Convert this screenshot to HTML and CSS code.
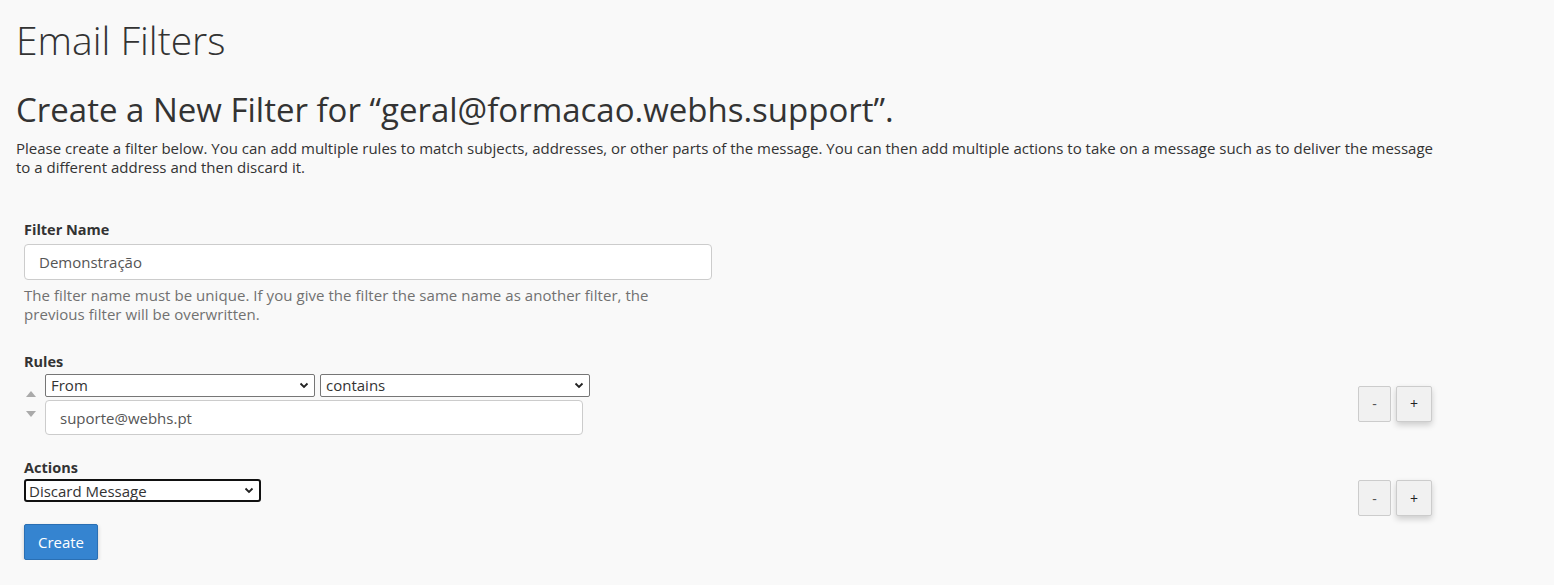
FILE: index.html
```html
<!DOCTYPE html>
<html lang="en">
<head>
<meta charset="utf-8">
<title>Email Filters</title>
<link rel="stylesheet" href="styles.css">
</head>
<body>
<div class="page">
  <h1 class="page-title">Email Filters</h1>
  <h2 class="subtitle">Create a New Filter for “geral@formacao.webhs.support”.</h2>
  <p class="intro">Please create a filter below. You can add multiple rules to match subjects, addresses, or other parts of the message. You can then add multiple actions to take on a message such as to deliver the message to a different address and then discard it.</p>

  <form class="filter-form">
    <div class="field">
      <label class="label">Filter Name</label>
      <input class="text-input name-input" type="text" value="Demonstração">
      <p class="help">The filter name must be unique. If you give the filter the same name as another filter, the previous filter will be overwritten.</p>
    </div>

    <div class="field rules">
      <label class="label">Rules</label>
      <div class="row">
        <div class="rule">
          <div class="arrows">
            <svg width="10" height="6" viewBox="0 0 10 6"><path d="M0 6 L5 0 L10 6 Z" fill="#aaa"/></svg>
            <svg width="10" height="6" viewBox="0 0 10 6"><path d="M0 0 L5 6 L10 0 Z" fill="#aaa"/></svg>
          </div>
          <div class="rule-body">
            <div class="selects">
              <select class="sel sel-part"><option>From</option></select>
              <select class="sel sel-match"><option>contains</option></select>
            </div>
            <input class="text-input value-input" type="text" value="suporte@webhs.pt">
          </div>
        </div>
        <div class="btns">
          <button type="button" class="btn-sm minus">-</button>
          <button type="button" class="btn-sm plus">+</button>
        </div>
      </div>
    </div>

    <div class="field actions">
      <label class="label">Actions</label>
      <div class="row row-top">
        <select class="sel sel-action"><option>Discard Message</option></select>
        <div class="btns">
          <button type="button" class="btn-sm minus">-</button>
          <button type="button" class="btn-sm plus">+</button>
        </div>
      </div>
    </div>

    <button type="button" class="btn-primary">Create</button>
  </form>
</div>
</body>
</html>
```
FILE: styles.css
```css
html, body {
  margin: 0;
  padding: 0;
  background: #f9f9f9;
}
body {
  font-family: "Open Sans", "Liberation Sans", sans-serif;
  color: #333;
  font-size: 15px;
}
.page {
  padding: 0 16px;
  width: 1428px;
}
.page-title {
  font-weight: 300;
  font-size: 39px;
  line-height: 48px;
  margin: 16px 0 0 0;
  color: #333;
}
.subtitle {
  font-weight: 500;
  font-size: 33px;
  line-height: 40px;
  margin: 26px 0 0 0;
  color: #333;
}
.intro {
  margin: 9px 0 0 0;
  line-height: 19px;
  font-size: 15px;
  letter-spacing: 0;
}
.filter-form {
  padding: 0 8px;
  margin-top: 43px;
}
.field {
  display: flex;
  flex-direction: column;
}
.label {
  font-weight: 700;
  font-size: 14.5px;
  line-height: 20px;
}
.text-input {
  font-family: inherit;
  font-size: 15px;
  color: #555;
  background: #fff;
  border: 1px solid #ccc;
  border-radius: 4px;
  box-sizing: border-box;
  padding: 0 14px;
  height: 35px;
  outline: none;
}
.name-input {
  width: 688px;
  height: 36px;
  margin-top: 4px;
}
.help {
  margin: 6px 0 0 0;
  color: #717171;
  line-height: 19px;
  width: 688px;
  letter-spacing: 0.05px;
}
.rules {
  margin-top: 28px;
}
.row {
  display: flex;
  justify-content: space-between;
  align-items: center;
}
.row-top {
  align-items: flex-start;
}
.rule {
  display: flex;
  align-items: center;
}
.arrows {
  display: flex;
  flex-direction: column;
  gap: 14px;
  width: 21px;
  padding-left: 2px;
  box-sizing: border-box;
}
.arrows svg { display: block; }
.rule-body {
  display: flex;
  flex-direction: column;
  gap: 3px;
}
.selects {
  display: flex;
  gap: 5px;
  margin-top: 2px;
}
.sel {
  appearance: none;
  -webkit-appearance: none;
  font-family: inherit;
  font-size: 15px;
  color: #333;
  background: #fff url("data:image/svg+xml,%3Csvg xmlns='http://www.w3.org/2000/svg' width='10' height='7' viewBox='0 0 10 7'%3E%3Cpath d='M1.5 1.5 L5 5 L8.5 1.5' fill='none' stroke='%23222' stroke-width='1.8'/%3E%3C/svg%3E") no-repeat right 5px center;
  border: 1px solid #767676;
  border-radius: 2px;
  height: 23px;
  padding: 0 20px 0 5px;
  box-sizing: border-box;
  line-height: 21px;
  outline: none;
}
.sel-part, .sel-match { width: 270px; }
.value-input { width: 538px; }
.actions {
  margin-top: 23px;
}
.sel-action {
  width: 237px;
  border: 2px solid #111;
  border-radius: 3px;
  padding-left: 3px;
  margin-top: 1px;
}
.btns {
  display: flex;
  gap: 5px;
}
.actions .btns { margin-top: 2px; }
.btn-sm {
  width: 33px;
  height: 36px;
  background: #f1f1f1;
  border: 1px solid #ccc;
  border-radius: 2px;
  font-family: inherit;
  font-size: 14px;
  color: #555;
  padding: 0;
}
.btn-sm.plus {
  width: 36px;
  color: #222;
  box-shadow: 0 3px 6px rgba(0,0,0,0.18);
}
.btn-primary {
  margin-top: 8px;
  background: #3584d0;
  color: #fff;
  border: 1px solid #2a6fb3;
  border-radius: 2px;
  font-family: inherit;
  font-size: 15px;
  height: 36px;
  width: 74px;
  padding: 0;
  box-shadow: 0 2px 4px rgba(0,0,0,0.2);
}
.field .row { width: 1408px; }
```
